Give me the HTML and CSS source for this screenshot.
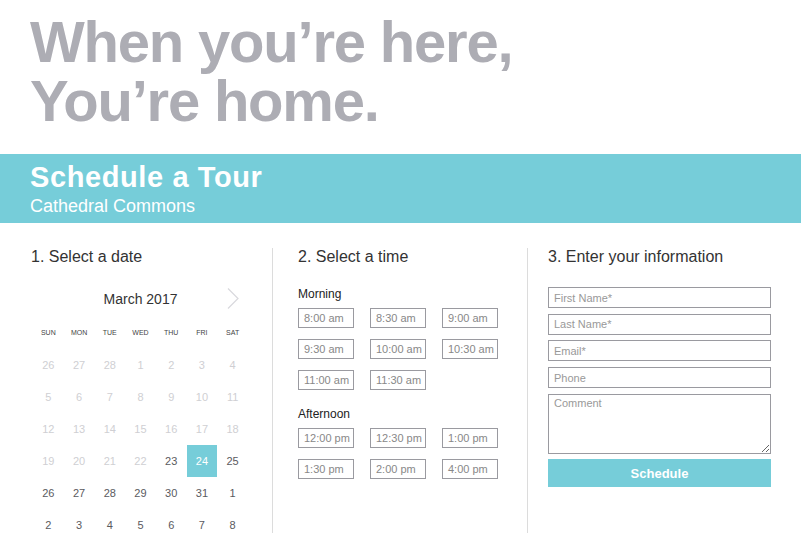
FILE: index.html
```html
<!DOCTYPE html>
<html lang="en">
<head>
    <meta charset="UTF-8">
    <meta name="viewport" content="width=device-width, initial-scale=1.0">
    <title>Schedule a Tour - Cathedral Commons</title>
    <link rel="stylesheet" href="styles.css">
</head>
<body>
    <header class="hero">
        <h1>When you’re here,<br>You’re home.</h1>
    </header>

    <section class="banner">
        <h2>Schedule a Tour</h2>
        <p>Cathedral Commons</p>
    </section>

    <main class="steps">
        <section class="step step-date">
            <h3>1. Select a date</h3>
            <div class="calendar">
                <div class="month-row">
                    <span class="month">March 2017</span>
                    <button class="next" aria-label="Next month">
                        <svg width="12" height="21" viewBox="0 0 12 21">
                            <path d="M1 0.5 L11 10.5 L1 20.5" fill="none" stroke="#d9d9dd" stroke-width="1.2"/>
                        </svg>
                    </button>
                </div>
                <div class="weekdays">
                    <span>SUN</span><span>MON</span><span>TUE</span><span>WED</span><span>THU</span><span>FRI</span><span>SAT</span>
                </div>
                <div class="days" id="days"></div>
            </div>
        </section>

        <section class="step step-time">
            <h3>2. Select a time</h3>
            <h4>Morning</h4>
            <div class="slots">
                <button class="slot">8:00 am</button>
                <button class="slot">8:30 am</button>
                <button class="slot">9:00 am</button>
                <button class="slot">9:30 am</button>
                <button class="slot">10:00 am</button>
                <button class="slot">10:30 am</button>
                <button class="slot">11:00 am</button>
                <button class="slot">11:30 am</button>
            </div>
            <h4>Afternoon</h4>
            <div class="slots">
                <button class="slot">12:00 pm</button>
                <button class="slot">12:30 pm</button>
                <button class="slot">1:00 pm</button>
                <button class="slot">1:30 pm</button>
                <button class="slot">2:00 pm</button>
                <button class="slot">4:00 pm</button>
            </div>
        </section>

        <section class="step step-info">
            <h3>3. Enter your information</h3>
            <form class="info-form" onsubmit="return false;">
                <input type="text" placeholder="First Name*">
                <input type="text" placeholder="Last Name*">
                <input type="email" placeholder="Email*">
                <input type="tel" placeholder="Phone">
                <textarea placeholder="Comment"></textarea>
                <button type="submit" class="submit">Schedule</button>
            </form>
        </section>
    </main>

    <script>
        // March 2017 grid: leading Feb days, then March, then April
        const days = document.getElementById('days');
        const cells = [];
        [26, 27, 28].forEach(d => cells.push({ d, cls: 'past' }));
        for (let d = 1; d <= 31; d++) {
            cells.push({ d, cls: d < 23 ? 'past' : (d === 24 ? 'selected' : '') });
        }
        for (let d = 1; d <= 8; d++) {
            cells.push({ d, cls: '' });
        }
        cells.forEach(c => {
            const span = document.createElement('span');
            span.className = 'day ' + c.cls;
            span.textContent = c.d;
            days.appendChild(span);
        });
    </script>
</body>
</html>
```

FILE: styles.css
```css
* {
    margin: 0;
    padding: 0;
    box-sizing: border-box;
}

body {
    font-family: 'Liberation Sans', Arial, sans-serif;
    background: #fff;
    color: #333;
}

.hero {
    padding: 12px 0 24px 30px;
}

.hero h1 {
    font-size: 58px;
    line-height: 59px;
    font-weight: bold;
    letter-spacing: -1.2px;
    color: #adadb4;
}

.banner {
    background: #76cdd9;
    color: #fff;
    padding: 7px 0 7px 30px;
}

.banner h2 {
    font-size: 29px;
    line-height: 32px;
    letter-spacing: 0.6px;
    font-weight: bold;
    margin-bottom: 3px;
}

.banner p {
    font-size: 18px;
    line-height: 20px;
}

.steps {
    display: grid;
    grid-template-columns: 272px 255px 1fr;
    padding-top: 25px;
}

.step h3 {
    font-size: 16px;
    line-height: 18px;
    font-weight: normal;
    color: #333;
}

.step-date {
    padding-left: 31px;
}

.step-time {
    border-left: 1px solid #dcdcdc;
    padding-left: 25px;
}

.step-info {
    border-left: 1px solid #dcdcdc;
    padding-left: 20px;
}

/* calendar */
.calendar {
    width: 215px;
    margin: 21px 0 0 2px;
}

.month-row {
    display: flex;
    justify-content: center;
    align-items: center;
    height: 24px;
    position: relative;
}

.month {
    font-size: 14px;
    color: #333;
}

.next {
    position: absolute;
    right: 9px;
    top: 1px;
    background: none;
    border: none;
    width: 12px;
    height: 21px;
    cursor: pointer;
}

.next svg {
    display: block;
}

.weekdays,
.days {
    display: grid;
    grid-template-columns: repeat(7, 1fr);
    text-align: center;
}

.weekdays {
    margin-top: 6px;
}

.weekdays span {
    font-size: 7px;
    line-height: 32px;
    color: #444;
}

.day {
    font-size: 11px;
    line-height: 32px;
    height: 32px;
    color: #5a5a5e;
}

.day.past {
    color: #cfcfd3;
}

.day.selected {
    background: #76cdd9;
    color: #fff;
}

/* time slots */
.step-time h4 {
    font-size: 12px;
    line-height: 14px;
    font-weight: normal;
    color: #222;
    margin: 21px 0 7px;
}

.step-time h4 + .slots + h4 {
    margin-top: 17px;
}

.slots {
    display: grid;
    grid-template-columns: repeat(3, 56px);
    column-gap: 16px;
    row-gap: 11px;
}

.slot {
    height: 20px;
    background: #fff;
    border: 1px solid #9a9aa0;
    font-family: inherit;
    font-size: 11px;
    color: #888;
    text-align: left;
    padding-left: 5px;
    cursor: pointer;
}

/* info form */
.info-form {
    display: flex;
    flex-direction: column;
    gap: 5.7px;
    width: 223px;
    margin-top: 21px;
}

.info-form input,
.info-form textarea {
    border: 1px solid #9a9aa0;
    font-family: inherit;
    font-size: 11px;
    color: #333;
    padding: 0 5px;
    height: 21px;
    outline: none;
}

.info-form textarea {
    height: 60px;
    padding-top: 2px;
}

.info-form ::placeholder {
    color: #999;
}

.submit {
    height: 28px;
    background: #76cdd9;
    border: none;
    color: #fff;
    font-family: inherit;
    font-weight: bold;
    font-size: 13px;
    cursor: pointer;
}
```
